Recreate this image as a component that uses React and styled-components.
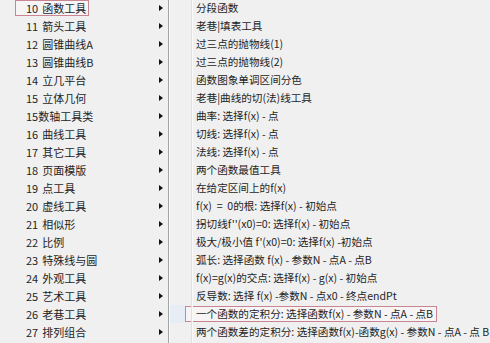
import React from 'react';
import styled, { createGlobalStyle } from 'styled-components';

const Global = createGlobalStyle`
  html, body {
    margin: 0;
    padding: 0;
    background: #f0f0f0;
  }
  body {
    font-family: "Noto Sans CJK SC", "Noto Sans", sans-serif;
    font-size: 10.6px;
    color: #1e1e1e;
    overflow: hidden;
  }
`;

const Screen = styled.div`
  display: flex;
  width: 490px;
  height: 343px;
  overflow: hidden;
  background: #f0f0f0;
`;

const Menu = styled.ul`
  list-style: none;
  margin: -1px 0 0 0;
  padding: 0;
  display: flex;
  flex-direction: column;
`;

const LeftMenu = styled(Menu)`
  width: 168px;
  flex: none;
  border-right: 1px solid #a3a3a3;
`;

const RightMenu = styled(Menu)`
  flex: 1;
  border-left: 1px solid #fbfbfb;
  position: relative;
  &::before {
    content: "";
    position: absolute;
    top: 0;
    bottom: -2px;
    left: 21px;
    width: 1px;
    background: #e0e0e0;
    box-shadow: 1px 0 0 #fafafa;
  }
`;

const Row = styled.li`
  height: 18px;
  display: flex;
  align-items: center;
  white-space: nowrap;
  line-height: 14px;
`;

const LeftRow = styled(Row)`
  justify-content: space-between;
  padding: 0 5px 0 15px;
  font-size: 11px;
  word-spacing: 1.5px;
`;

const RightRow = styled(Row)`
  padding-left: 15px;
  background: ${({ $hot }) =>
    $hot ? 'linear-gradient(to right, #e6edf5 0, #e6edf5 16px, transparent 16px)' : 'transparent'};
`;

const Label = styled.span`
  display: inline-flex;
  align-items: center;
  height: 16px;
  box-sizing: border-box;
  white-space: pre;
  padding: ${({ $left }) => ($left ? '0 2px 0 10px' : '0 3px 0 10px')};
  border: 1px solid ${({ $marked }) => ($marked ? '#c98592' : 'transparent')};
  background: ${({ $marked }) => ($marked ? '#f7f4f5' : 'transparent')};
`;

const Arrow = styled.span`
  width: 0;
  height: 0;
  border-top: 3.5px solid transparent;
  border-bottom: 3.5px solid transparent;
  border-left: 4px solid #111;
`;

const tools = [
  '10 函数工具',
  '11 箭头工具',
  '12 圆锥曲线A',
  '13 圆锥曲线B',
  '14 立几平台',
  '15 立体几何',
  '15数轴工具类',
  '16 曲线工具',
  '17 其它工具',
  '18 页面模版',
  '19 点工具',
  '20 虚线工具',
  '21 相似形',
  '22 比例',
  '23 特殊线与圆',
  '24 外观工具',
  '25 艺术工具',
  '26 老巷工具',
  '27 排列组合',
];

const funcs = [
  '分段函数',
  '老巷|填表工具',
  '过三点的抛物线(1)',
  '过三点的抛物线(2)',
  '函数图象单调区间分色',
  '老巷|曲线的切(法)线工具',
  '曲率: 选择f(x) - 点',
  '切线: 选择f(x) - 点',
  '法线: 选择f(x) - 点',
  '两个函数最值工具',
  '在给定区间上的f(x)',
  'f(x)  =  0的根: 选择f(x) - 初始点',
  "拐切线f''(x0)=0: 选择f(x) - 初始点",
  "极大/极小值 f'(x0)=0: 选择f(x) -初始点",
  '弧长: 选择函数 f(x) - 参数N - 点A - 点B',
  'f(x)=g(x)的交点: 选择f(x) - g(x) - 初始点',
  '反导数: 选择 f(x) -参数N - 点x0 - 终点endPt',
  '一个函数的定积分: 选择函数f(x) - 参数N - 点A - 点B',
  '两个函数差的定积分: 选择函数f(x)-函数g(x) - 参数N - 点A - 点 B',
];

export default function App() {
  return (
    <>
      <Global />
      <Screen>
        <LeftMenu>
          {tools.map((t, i) => (
            <LeftRow key={t}>
              <Label $left $marked={i === 0}>{t}</Label>
              <Arrow />
            </LeftRow>
          ))}
        </LeftMenu>
        <RightMenu>
          {funcs.map((f, i) => (
            <RightRow key={f} $hot={i === 17}>
              <Label $marked={i === 17}>{f}</Label>
            </RightRow>
          ))}
        </RightMenu>
      </Screen>
    </>
  );
}
